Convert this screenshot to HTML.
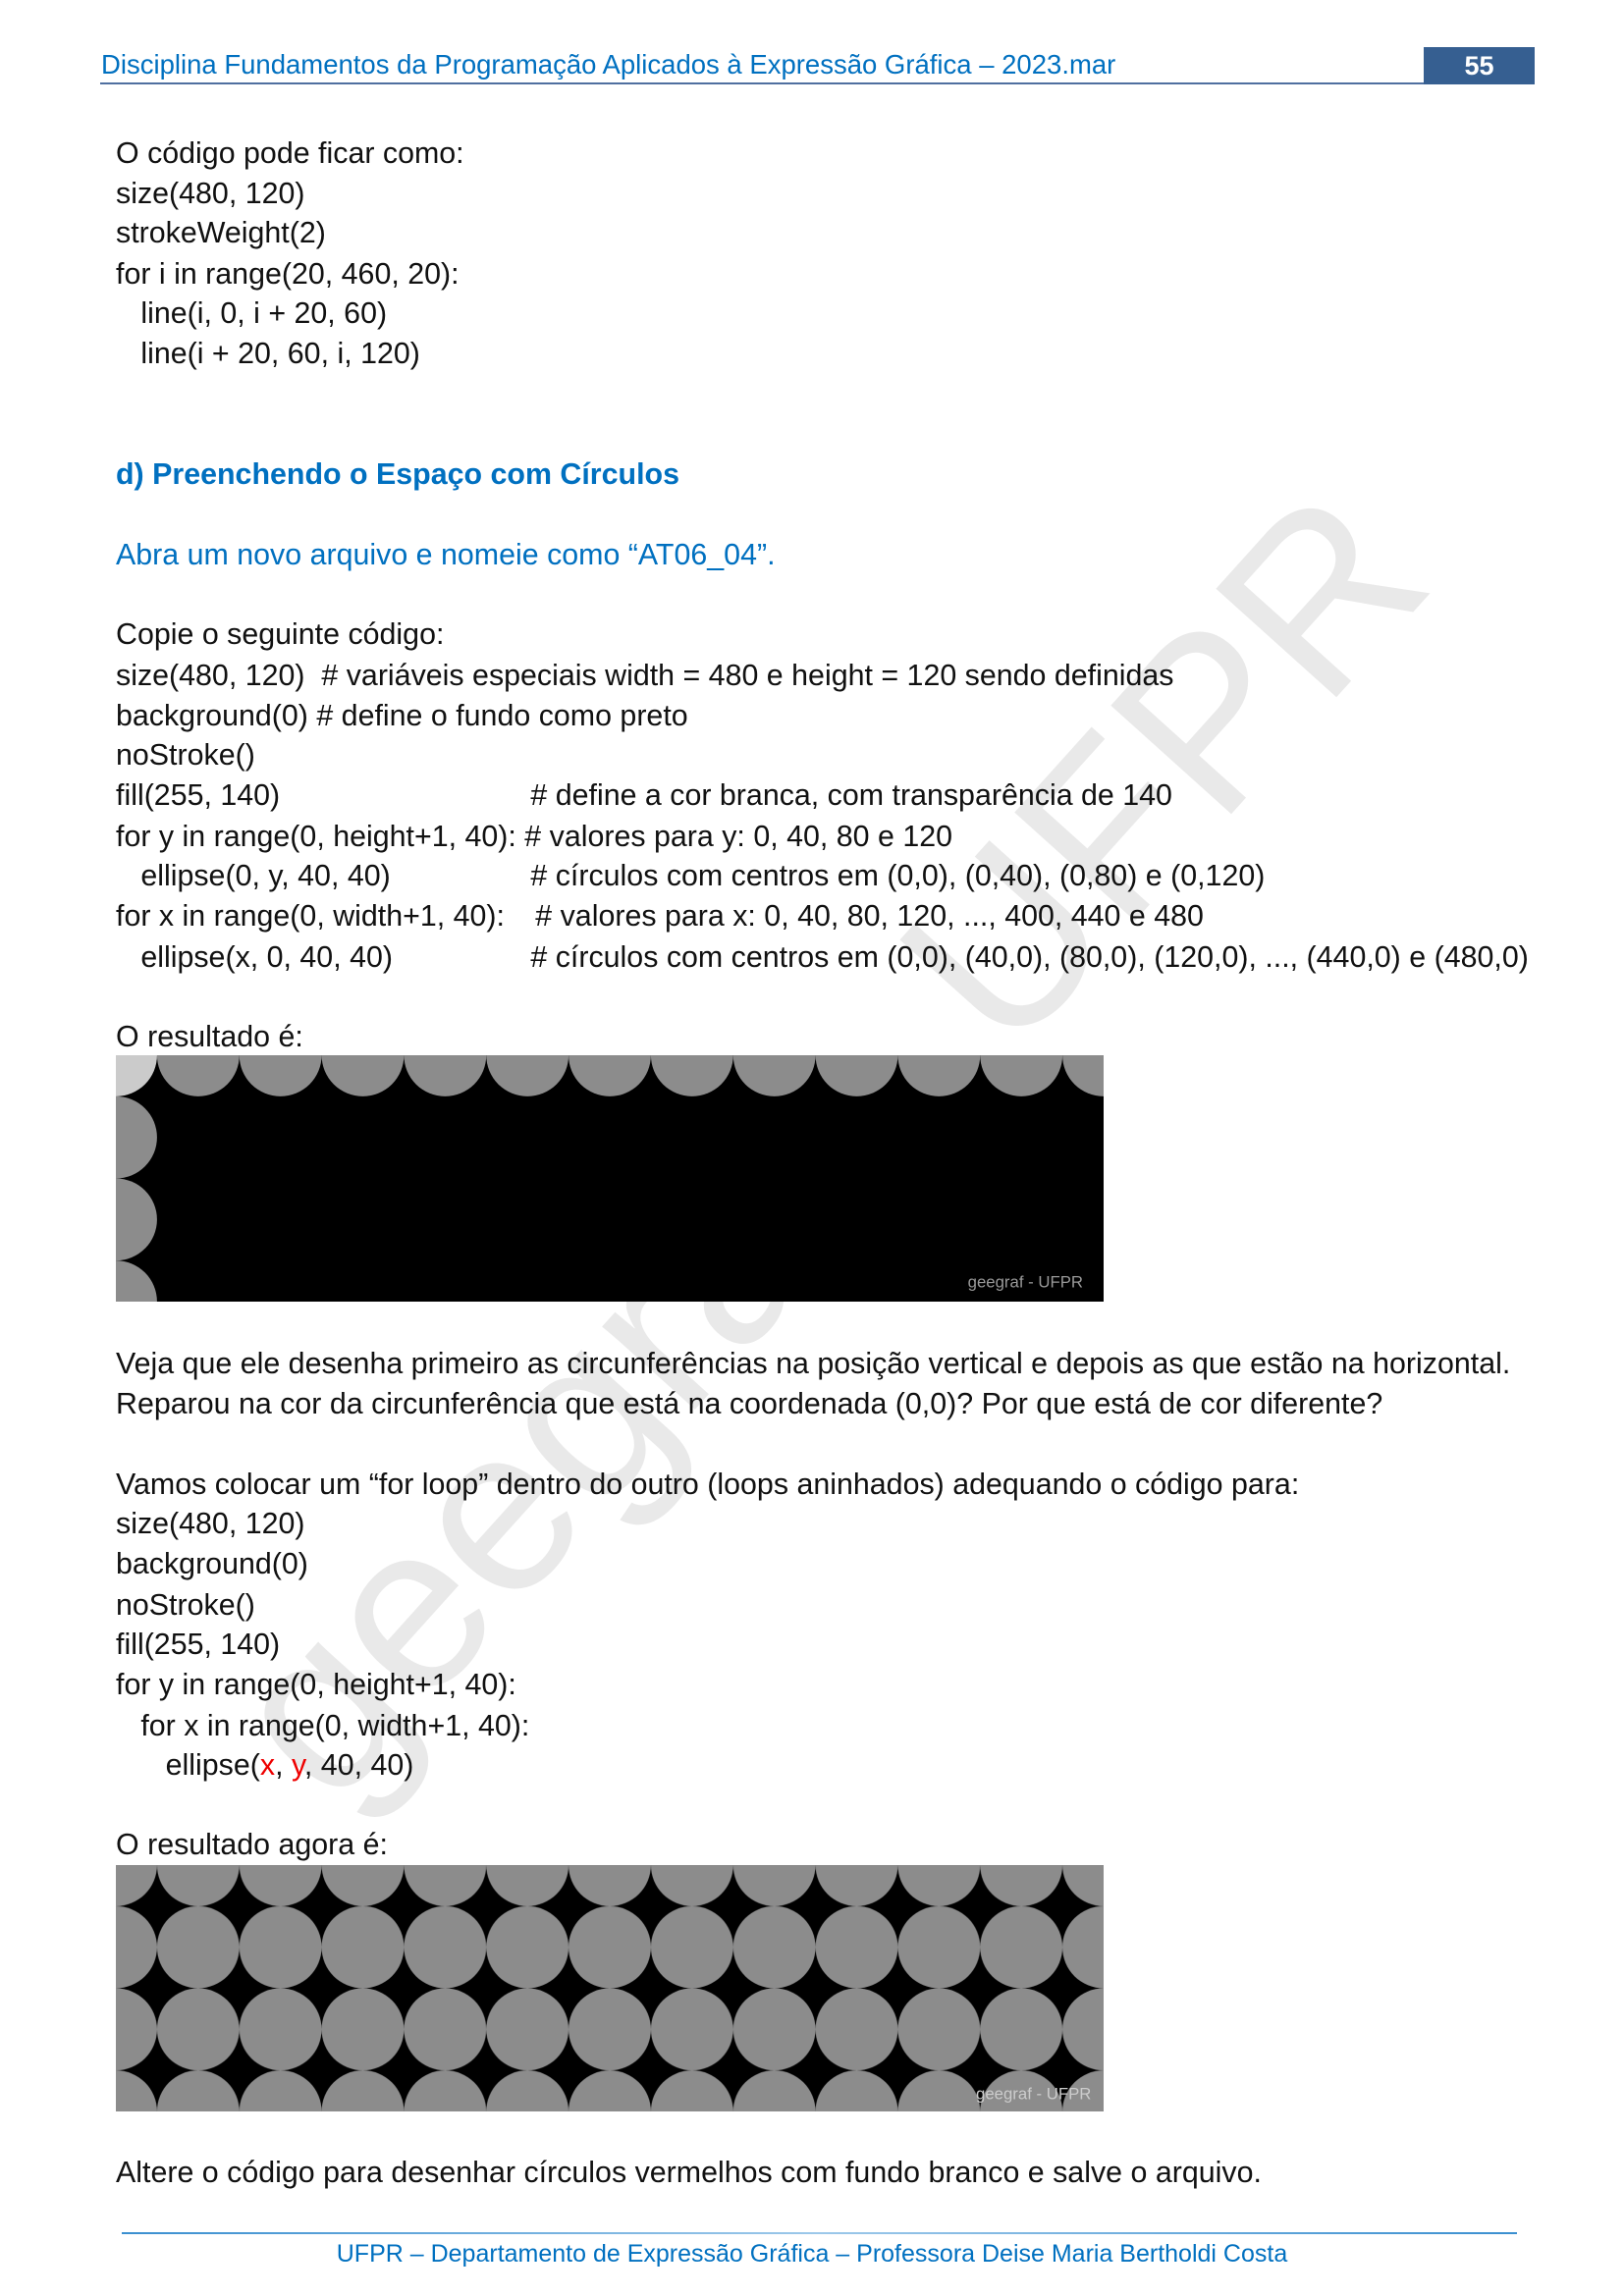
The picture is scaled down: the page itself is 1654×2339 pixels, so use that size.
<!DOCTYPE html>
<html><head><meta charset="utf-8"><style>
html,body{margin:0;padding:0;background:#fff;}
body{width:1654px;height:2339px;position:relative;overflow:hidden;font-family:"Liberation Sans",sans-serif;}
.l{position:absolute;left:118px;font-size:31px;line-height:40px;height:40px;color:#111;white-space:nowrap;transform:scaleX(0.98);transform-origin:left center;}
.c{position:absolute;left:431px;}
.b{color:#0070c0}
.wm{position:absolute;left:840px;top:1165px;font-size:240px;color:#e9e9e9;white-space:nowrap;transform:translate(-50%,-50%) rotate(-48deg);font-family:"Liberation Sans",sans-serif;line-height:1;}
</style></head><body>
<div class="wm">geegraf - UFPR</div>

<div style="position:absolute;left:103px;top:50px;font-size:27.5px;color:#0070c0;white-space:nowrap;">Disciplina Fundamentos da Programação Aplicados à Expressão Gráfica – 2023.mar</div>
<div style="position:absolute;left:102px;top:84px;width:1461px;height:2px;background:#4f6fa0"></div>
<div style="position:absolute;left:1450px;top:48px;width:113px;height:38px;background:#365f91;color:#fff;font-weight:bold;font-size:27px;line-height:38px;text-align:center">55</div>

<div class="l" style="top:136px">O código pode ficar como:</div>
<div class="l" style="top:177px">size(480, 120)</div>
<div class="l" style="top:217px">strokeWeight(2)</div>
<div class="l" style="top:259px">for i in range(20, 460, 20):</div>
<div class="l" style="top:299px">&nbsp;&nbsp;&nbsp;line(i, 0, i + 20, 60)</div>
<div class="l" style="top:340px">&nbsp;&nbsp;&nbsp;line(i + 20, 60, i, 120)</div>

<div class="l b" style="top:463px;font-weight:bold">d) Preenchendo o Espaço com Círculos</div>
<div class="l b" style="top:545px">Abra um novo arquivo e nomeie como “AT06_04”.</div>

<div class="l" style="top:626px">Copie o seguinte código:</div>
<div class="l" style="top:668px">size(480, 120)&nbsp; # variáveis especiais width = 480 e height = 120 sendo definidas</div>
<div class="l" style="top:709px">background(0) # define o fundo como preto</div>
<div class="l" style="top:749px">noStroke()</div>
<div class="l" style="top:790px;width:1700px">fill(255, 140)<span class="c"># define a cor branca, com transparência de 140</span></div>
<div class="l" style="top:832px">for y in range(0, height+1, 40): # valores para y: 0, 40, 80 e 120</div>
<div class="l" style="top:872px;width:1700px">&nbsp;&nbsp;&nbsp;ellipse(0, y, 40, 40)<span class="c"># círculos com centros em (0,0), (0,40), (0,80) e (0,120)</span></div>
<div class="l" style="top:913px;width:1700px">for x in range(0, width+1, 40):<span class="c" style="left:436px"># valores para x: 0, 40, 80, 120, ..., 400, 440 e 480</span></div>
<div class="l" style="top:955px;width:1700px">&nbsp;&nbsp;&nbsp;ellipse(x, 0, 40, 40)<span class="c"># círculos com centros em (0,0), (40,0), (80,0), (120,0), ..., (440,0) e (480,0)</span></div>

<div class="l" style="top:1036px">O resultado é:</div>
<svg style="position:absolute;left:118px;top:1075px" width="1006" height="251" viewBox="0 0 480 120" preserveAspectRatio="none">
<rect width="480" height="120" fill="#000"/>
<g fill="#fff" fill-opacity="0.549">
<circle cx="0" cy="0" r="20"/><circle cx="0" cy="40" r="20"/><circle cx="0" cy="80" r="20"/><circle cx="0" cy="120" r="20"/>
<circle cx="0" cy="0" r="20"/><circle cx="40" cy="0" r="20"/><circle cx="80" cy="0" r="20"/><circle cx="120" cy="0" r="20"/><circle cx="160" cy="0" r="20"/><circle cx="200" cy="0" r="20"/><circle cx="240" cy="0" r="20"/><circle cx="280" cy="0" r="20"/><circle cx="320" cy="0" r="20"/><circle cx="360" cy="0" r="20"/><circle cx="400" cy="0" r="20"/><circle cx="440" cy="0" r="20"/><circle cx="480" cy="0" r="20"/>
</g>
<text x="470" y="113" font-size="8" fill="#999" text-anchor="end" font-family="Liberation Sans">geegraf - UFPR</text>
</svg>

<div class="l" style="top:1369px">Veja que ele desenha primeiro as circunferências na posição vertical e depois as que estão na horizontal.</div>
<div class="l" style="top:1410px">Reparou na cor da circunferência que está na coordenada (0,0)? Por que está de cor diferente?</div>

<div class="l" style="top:1492px">Vamos colocar um “for loop” dentro do outro (loops aninhados) adequando o código para:</div>
<div class="l" style="top:1532px">size(480, 120)</div>
<div class="l" style="top:1573px">background(0)</div>
<div class="l" style="top:1615px">noStroke()</div>
<div class="l" style="top:1655px">fill(255, 140)</div>
<div class="l" style="top:1696px">for y in range(0, height+1, 40):</div>
<div class="l" style="top:1738px">&nbsp;&nbsp;&nbsp;for x in range(0, width+1, 40):</div>
<div class="l" style="top:1778px">&nbsp;&nbsp;&nbsp;&nbsp;&nbsp;&nbsp;ellipse(<span style="color:#e00">x</span>, <span style="color:#e00">y</span>, 40, 40)</div>

<div class="l" style="top:1859px">O resultado agora é:</div>
<svg style="position:absolute;left:118px;top:1900px" width="1006" height="251" viewBox="0 0 480 120" preserveAspectRatio="none">
<defs><pattern id="p" x="-20" y="-20" width="40" height="40" patternUnits="userSpaceOnUse"><circle cx="20" cy="20" r="20" fill="#8c8c8c"/></pattern></defs>
<rect width="480" height="120" fill="#000"/>
<rect width="480" height="120" fill="url(#p)"/>
<text x="474" y="114" font-size="8" fill="#ccc" text-anchor="end" font-family="Liberation Sans">geegraf - UFPR</text>
</svg>

<div class="l" style="top:2193px">Altere o código para desenhar círculos vermelhos com fundo branco e salve o arquivo.</div>

<div style="position:absolute;left:124px;top:2274px;width:1421px;height:2px;background:linear-gradient(90deg,#3a8fd0,#9cc8ea 50%,#3a8fd0)"></div>
<div style="position:absolute;left:0;width:1654px;top:2280px;text-align:center;font-size:25px;color:#0070c0;white-space:nowrap;line-height:32px">UFPR – Departamento de Expressão Gráfica – Professora Deise Maria Bertholdi Costa</div>
</body></html>
